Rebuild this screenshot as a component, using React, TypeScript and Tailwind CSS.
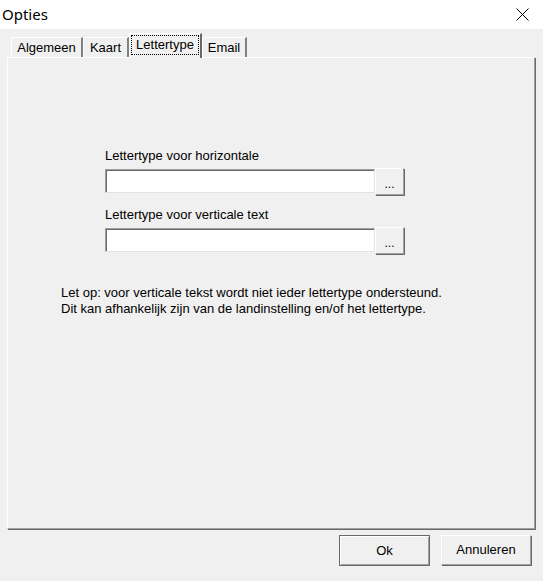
import React from "react";

function Tab({ label, selected, w }: { label: string; selected?: boolean; w: string }) {
  if (selected) {
    return (
      <div
        className={`${w} relative z-10 h-[25px] -mb-[1px] bg-[#f0f0f0] border-t border-l border-white border-r-2 border-r-[#696969] flex items-stretch p-[1px] pb-[3px]`}
      >
        <div className="flex-1 border border-dotted border-black flex items-center justify-center">
          {label}
        </div>
      </div>
    );
  }
  return (
    <div
      className={`${w} h-[20px] bg-[#f0f0f0] border-t border-l border-white border-r-2 border-r-[#808080] flex items-center justify-center pt-[1px]`}
    >
      {label}
    </div>
  );
}

function FontField({ label }: { label: string }) {
  return (
    <div className="flex flex-col ml-[97px]">
      <div className="leading-[15px] h-[15px] whitespace-nowrap">{label}</div>
      <div className="flex items-center h-[28px] mt-[4px]">
        <div className="w-[270px] h-[24px] bg-white border-t border-l border-[#a0a0a0] border-b border-r border-b-[#e3e3e3] border-r-[#e3e3e3] shadow-[inset_1px_1px_0_#696969]" />
        <div className="w-[29px] h-[27px] bg-[#f0f0f0] border-t border-l border-white border-r border-b border-r-[#a0a0a0] border-b-[#a0a0a0] shadow-[1px_1px_0_#696969] flex items-center justify-center pt-[6px] text-[12px]">
          ...
        </div>
      </div>
    </div>
  );
}

export default function App() {
  return (
    <div className="w-[543px] h-[581px] bg-[#f0f0f0] flex flex-col font-['Liberation_Sans',Arial,sans-serif] text-[13px] text-black overflow-hidden">
      {/* Title bar */}
      <div className="h-[29px] bg-white flex items-center justify-between pl-[2px] pr-[14px] shrink-0">
        <span className="font-['Noto_Sans',sans-serif] text-[15px] leading-none -mt-[1px]">Opties</span>
        <svg width="13" height="13" viewBox="0 0 13 13" className="mt-[-1px]">
          <path d="M0.5 0.5 L12.5 12.5 M12.5 0.5 L0.5 12.5" stroke="#000" strokeWidth="1" fill="none" />
        </svg>
      </div>

      {/* Tabs */}
      <div className="h-[28px] flex items-end pl-[11px] shrink-0">
        <Tab label="Algemeen" w="w-[72px]" />
        <Tab label="Kaart" w="w-[46px]" />
        <Tab label="Lettertype" w="w-[73px]" selected />
        <Tab label="Email" w="w-[45px]" />
      </div>

      {/* Panel */}
      <div className="ml-[7px] w-[528px] h-[472px] shrink-0 border-t border-l border-white border-r border-b border-r-[#a0a0a0] border-b-[#a0a0a0] shadow-[1px_1px_0_#696969] flex flex-col pt-[90px]">
        <FontField label="Lettertype voor horizontale" />
        <div className="h-[12px]" />
        <FontField label="Lettertype voor verticale text" />
        <div className="ml-[53px] mt-[31px] leading-[16px] whitespace-nowrap">
          <div>Let op: voor verticale tekst wordt niet ieder lettertype ondersteund.</div>
          <div>Dit kan afhankelijk zijn van de landinstelling en/of het lettertype.</div>
        </div>
      </div>

      {/* Buttons */}
      <div className="flex justify-end gap-[11px] pr-[12px] mt-[6px] h-[31px] shrink-0">
        <button className="w-[91px] h-[31px] bg-[#f0f0f0] border border-[#696969] shadow-[inset_1px_1px_0_#ffffff,inset_-1px_-1px_0_#a0a0a0] flex items-center justify-center">
          Ok
        </button>
        <button className="w-[90px] h-[30px] bg-[#f0f0f0] border-t border-l border-white border-r border-b border-r-[#a0a0a0] border-b-[#a0a0a0] shadow-[1px_1px_0_#696969] flex items-center justify-center">
          Annuleren
        </button>
      </div>
    </div>
  );
}
